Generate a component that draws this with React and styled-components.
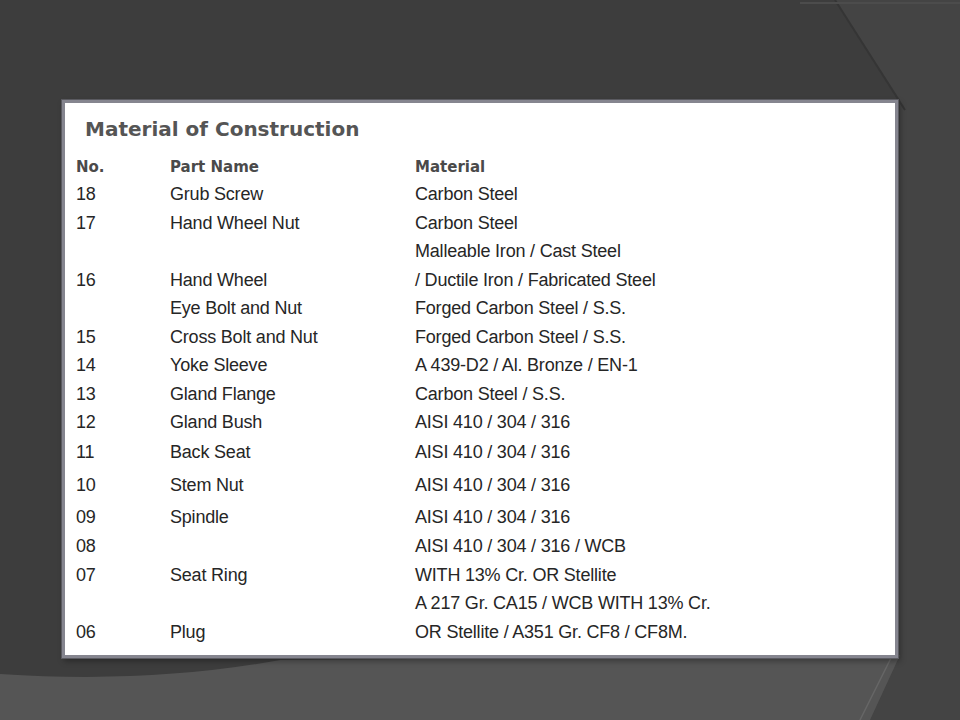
import React from 'react'
import styled, {createGlobalStyle} from 'styled-components'

const Global = createGlobalStyle`
  html, body { margin: 0; padding: 0; }
  body { background: #3d3d3d; }
`

const Slide = styled.div`
  position: relative;
  width: 960px;
  height: 720px;
  overflow: hidden;
  background: #3d3d3d;
  display: flex;
  justify-content: center;
  padding-top: 100px;
  box-sizing: border-box;
`

const Backdrop = styled.svg`
  position: absolute;
  left: 0;
  top: 0;
`

const Panel = styled.div`
  position: relative;
  width: 836px;
  height: 558px;
  background: #ffffff;
  border: 3px solid #85858f;
  box-shadow: 0 0 0 1px #5a5a60, 2px 3px 6px rgba(0, 0, 0, 0.35);
  padding: 14px 0 0 11px;
  box-sizing: border-box;
  font-family: "Liberation Sans", Arial, sans-serif;
  color: #262626;
`

const Title = styled.h1`
  margin: 0 0 0 9px;
  font-family: "DejaVu Sans", Verdana, sans-serif;
  font-weight: bold;
  font-size: 20px;
  line-height: 24px;
  color: #555555;
`

const Table = styled.div`
  display: grid;
  grid-template-columns: 94px 245px 1fr;
  margin-top: 13px;
`

const Head = styled.div`
  font-family: "DejaVu Sans", Verdana, sans-serif;
  font-weight: bold;
  font-size: 15px;
  color: #4a4a4a;
  height: 26px;
  line-height: 26px;
`

const Cell = styled.div`
  font-size: 18px;
  letter-spacing: -0.2px;
  height: ${p => p.h}px;
  line-height: ${p => p.h}px;
  white-space: nowrap;
`

const rows = [
  ['18', 'Grub Screw', 'Carbon Steel', 28.5],
  ['17', 'Hand Wheel Nut', 'Carbon Steel', 28.5],
  ['', '', 'Malleable Iron / Cast Steel', 28.5],
  ['16', 'Hand Wheel', '/ Ductile Iron / Fabricated Steel', 28.5],
  ['', 'Eye Bolt and Nut', 'Forged Carbon Steel / S.S.', 28.5],
  ['15', 'Cross Bolt and Nut', 'Forged Carbon Steel / S.S.', 28.5],
  ['14', 'Yoke Sleeve', 'A 439-D2 / Al. Bronze / EN-1', 28.5],
  ['13', 'Gland Flange', 'Carbon Steel / S.S.', 28.5],
  ['12', 'Gland Bush', 'AISI 410 / 304 / 316', 28.5],
  ['11', 'Back Seat', 'AISI 410 / 304 / 316', 31],
  ['10', 'Stem Nut', 'AISI 410 / 304 / 316', 34],
  ['09', 'Spindle', 'AISI 410 / 304 / 316', 30.5],
  ['08', '', 'AISI 410 / 304 / 316 / WCB', 28.5],
  ['07', 'Seat Ring', 'WITH 13% Cr. OR Stellite', 28.5],
  ['', '', 'A 217 Gr. CA15 / WCB WITH 13% Cr.', 28.5],
  ['06', 'Plug', 'OR Stellite / A351 Gr. CF8 / CF8M.', 28.5],
]

export default function App() {
  return (
    <Slide>
      <Global />
      <Backdrop width="960" height="720" viewBox="0 0 960 720">
        <path d="M835 0 L960 0 L960 720 L860 720 L895 640 L900 100 Z" fill="#444444" />
        <path d="M835 0 L905 110" stroke="#353535" strokeWidth="2" fill="none" />
        <path d="M800 3 L960 3" stroke="#4c4c4c" strokeWidth="2" />
        <path d="M0 674 Q150 684 280 660 L900 655 L870 720 L0 720 Z" fill="#555555" />
        <path d="M860 720 L895 650" stroke="#666666" strokeWidth="1.5" />
      </Backdrop>
      <Panel>
        <Title>Material of Construction</Title>
        <Table>
          <Head>No.</Head>
          <Head>Part Name</Head>
          <Head>Material</Head>
          {rows.map((r, i) => (
            <React.Fragment key={i}>
              <Cell h={r[3]}>{r[0]}</Cell>
              <Cell h={r[3]}>{r[1]}</Cell>
              <Cell h={r[3]}>{r[2]}</Cell>
            </React.Fragment>
          ))}
        </Table>
      </Panel>
    </Slide>
  )
}
